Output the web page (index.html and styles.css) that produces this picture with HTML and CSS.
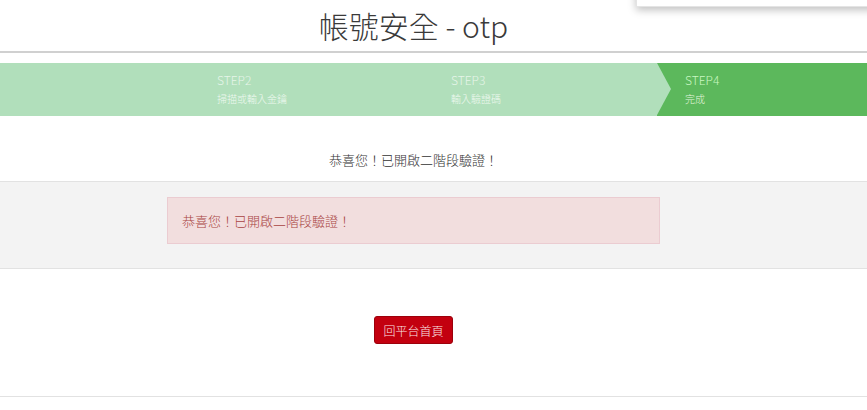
FILE: index.html
```html
<!DOCTYPE html>
<html lang="zh-Hant">
<head>
    <meta charset="UTF-8">
    <meta name="viewport" content="width=device-width, initial-scale=1.0">
    <title>帳號安全 - otp</title>
    <link rel="stylesheet" href="styles.css">
</head>
<body>
    <div class="popup"></div>
    <header class="top">
        <h1>帳號安全 - otp</h1>
    </header>

    <div class="steps">
        <div class="step first"></div>
        <div class="step">
            <span class="step-no">STEP2</span>
            <span class="step-name">掃描或輸入金鑰</span>
        </div>
        <div class="step">
            <span class="step-no">STEP3</span>
            <span class="step-name">輸入驗證碼</span>
        </div>
        <div class="step active">
            <span class="step-no">STEP4</span>
            <span class="step-name">完成</span>
        </div>
    </div><!--steps-->

    <p class="done-msg">恭喜您！已開啟二階段驗證！</p>

    <section class="band">
        <div class="alert">恭喜您！已開啟二階段驗證！</div>
    </section>

    <section class="actions">
        <button type="button" class="btn-home">回平台首頁</button>
    </section>
</body>
</html>
```

FILE: styles.css
```css
html, body {
    margin: 0;
    padding: 0;
    box-sizing: border-box;
    font-family: "Noto Sans CJK TC", "Liberation Sans", sans-serif;
    color: #333;
    background: #fff;
    overflow: hidden;
}

.popup {
    position: absolute;
    top: -40px;
    left: 636px;
    width: 240px;
    height: 45px;
    background: #fff;
    border: 1px solid #e4e4e4;
    box-shadow: 0 3px 8px rgba(0, 0, 0, 0.25);
}

.top {
    height: 51px;
    border-bottom: 2px solid #d0d0d0;
    display: flex;
    justify-content: center;
    padding-right: 40px;
}

h1 {
    margin: 5px 0 0;
    font-size: 30px;
    font-weight: 300;
    line-height: 40px;
    color: #3a3a3a;
}

.steps {
    display: flex;
    margin-top: 10px;
    height: 53px;
    background: #b1dfbb;
}

.step {
    position: relative;
    width: 234px;
    flex-shrink: 0;
    padding: 8px 0 0 28px;
    box-sizing: border-box;
    display: flex;
    flex-direction: column;
}

.step.first {
    width: 189px;
}

.step-no {
    font-size: 12px;
    line-height: 17px;
    font-weight: 300;
    color: #e6f5e9;
}

.step-name {
    font-size: 10px;
    line-height: 22px;
    font-weight: 300;
    color: #eef9f0;
}

.step.active {
    flex: 1;
    background: #5cb85c;
}

.step.active::before {
    content: "";
    position: absolute;
    left: 0;
    top: 0;
    border-left: 14px solid #b1dfbb;
    border-top: 26.5px solid transparent;
    border-bottom: 26.5px solid transparent;
}

.step.active .step-no {
    color: #c9f7c2;
}

.step.active .step-name {
    color: #e4f6df;
}

.done-msg {
    margin: 0;
    padding: 35px 40px 12px 0;
    text-align: center;
    font-size: 13px;
    line-height: 18px;
    font-weight: 300;
    color: #333;
}

.band {
    background: #f3f3f3;
    border-top: 1px solid #e2e2e2;
    border-bottom: 1px solid #e2e2e2;
    padding: 15px 0 24px 167px;
}

.alert {
    width: 493px;
    height: 47px;
    box-sizing: border-box;
    padding: 0 14px;
    display: flex;
    align-items: center;
    background: #f2dede;
    border: 1px solid #ebccd1;
    color: #a94442;
    font-size: 13px;
    font-weight: 300;
}

.actions {
    height: 127px;
    border-bottom: 1px solid #e2e2e2;
    display: flex;
    padding-left: 374px;
}

.btn-home {
    margin-top: 47px;
    width: 79px;
    height: 28px;
    padding: 0;
    background: #c3000f;
    border: 1px solid #9c000b;
    border-radius: 3px;
    color: #fbe6e8;
    font-family: "Noto Sans CJK TC", "Liberation Sans", sans-serif;
    font-size: 12px;
    font-weight: 300;
}
```
